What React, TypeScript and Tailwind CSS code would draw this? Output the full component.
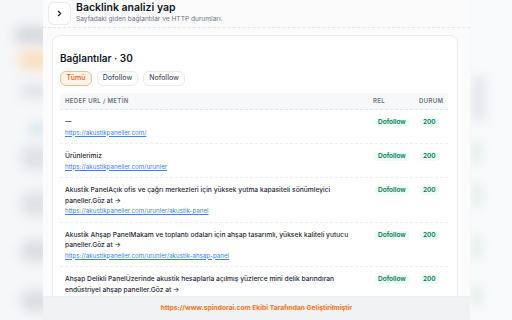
import { ChevronRight } from "lucide-react";

type Row = { title: string[]; url: string };

const rows: Row[] = [
  { title: ["—"], url: "https://akustikpaneller.com/" },
  { title: ["Ürünlerimiz"], url: "https://akustikpaneller.com/urunler" },
  {
    title: [
      "Akustik PanelAçık ofis ve çağrı merkezleri için yüksek yutma kapasiteli sönümleyici",
      "paneller.Göz at →",
    ],
    url: "https://akustikpaneller.com/urunler/akustik-panel",
  },
  {
    title: [
      "Akustik Ahşap PanelMakam ve toplantı odaları için ahşap tasarımlı, yüksek kaliteli yutucu",
      "paneller.Göz at →",
    ],
    url: "https://akustikpaneller.com/urunler/akustik-ahsap-panel",
  },
  {
    title: [
      "Ahşap Delikli PanelÜzerinde akustik hesaplarla açılmış yüzlerce mini delik barındıran",
      "endüstriyel ahşap paneller.Göz at →",
    ],
    url: "https://akustikpaneller.com/urunler/ahsap-delikli-panel",
  },
];

function SideBlur({ side }: { side: "left" | "right" }) {
  if (side === "left") {
    return (
      <div className="relative w-[43px] shrink-0 overflow-hidden bg-[#f6f7f9]">
        <div className="absolute left-[14px] top-[26px] h-[18px] w-[40px] rounded-full bg-[#d6d8dd] blur-[6px]" />
        <div className="absolute left-[18px] top-[50px] h-[20px] w-[34px] rounded-full bg-[#fadfc2] blur-[6px]" />
        <div className="absolute left-[20px] top-[84px] h-[14px] w-[30px] rounded-full bg-[#e0e2e6] blur-[6px]" />
        <div className="absolute left-[28px] top-[122px] h-[14px] w-[20px] rounded-full bg-[#dde9f1] blur-[5px]" />
        <div className="absolute left-[20px] top-[146px] h-[24px] w-[34px] rounded-full bg-[#dfe1e5] blur-[6px]" />
        <div className="absolute left-[20px] top-[192px] h-[24px] w-[34px] rounded-full bg-[#dfe1e5] blur-[6px]" />
        <div className="absolute left-[20px] top-[240px] h-[22px] w-[34px] rounded-full bg-[#dcdee2] blur-[6px]" />
        <div className="absolute left-[20px] top-[290px] h-[22px] w-[34px] rounded-full bg-[#dcdee2] blur-[6px]" />
      </div>
    );
  }
  return (
    <div className="relative w-[42px] shrink-0 overflow-hidden bg-[#f8f9fa]">
      <div className="absolute left-[2px] top-[76px] h-[46px] w-[14px] rounded-full bg-[#e6e8ec] blur-[5px]" />
      <div className="absolute left-[2px] top-[142px] h-[22px] w-[10px] rounded-full bg-[#e4efe9] blur-[4px]" />
      <div className="absolute left-[2px] top-[184px] h-[22px] w-[10px] rounded-full bg-[#e4efe9] blur-[4px]" />
      <div className="absolute left-[2px] top-[236px] h-[22px] w-[10px] rounded-full bg-[#e4efe9] blur-[4px]" />
      <div className="absolute left-[2px] top-[286px] h-[20px] w-[10px] rounded-full bg-[#e4efe9] blur-[4px]" />
    </div>
  );
}

export default function App() {
  return (
    <div className="flex h-[320px] w-[512px] overflow-hidden bg-[#f6f7f9] font-['Inter',sans-serif] text-[#1f2937]">
      <SideBlur side="left" />

      <div className="flex w-[427px] shrink-0 flex-col bg-[#fbfbfc]">
        <div className="flex h-[28px] shrink-0 items-start gap-[5px] border-b border-dashed border-[#e5e7eb] pl-[5px]">
          <button
            type="button"
            className="mt-[2px] flex h-[23px] w-[23px] items-center justify-center rounded-md border border-[#e8eaed] bg-white text-[#111827]"
          >
            <ChevronRight className="h-[9px] w-[9px]" strokeWidth={3} />
          </button>
          <div className="pt-[1px]">
            <h1 className="text-[10.5px] font-semibold leading-[13px] text-[#111827]">
              Backlink analizi yap
            </h1>
            <p className="text-[6.6px] leading-[10px] text-[#6b7280]">
              Sayfadaki giden bağlantılar ve HTTP durumları.
            </p>
          </div>
        </div>

        <div className="flex-1 overflow-hidden pl-[9px] pr-[12px] pt-[7px]">
          <div className="rounded-lg border border-[#eaecef] bg-white pb-4 pl-[7px] pr-[7px] pt-[15px]">
            <h2 className="text-[10px] font-semibold leading-[14px] text-[#111827]">
              Bağlantılar · 30
            </h2>
            <div className="mt-[6px] flex gap-[5px]">
              <button
                type="button"
                className="h-[15px] w-[32px] rounded-md border border-[#f5b98a] bg-[#fff4ea] text-[7px] font-medium text-[#ea580c]"
              >
                Tümü
              </button>
              <button
                type="button"
                className="h-[15px] w-[41px] rounded-md border border-[#e8eaed] bg-white text-[7px] font-medium text-[#4b5563]"
              >
                Dofollow
              </button>
              <button
                type="button"
                className="h-[15px] w-[42px] rounded-md border border-[#e8eaed] bg-white text-[7px] font-medium text-[#4b5563]"
              >
                Nofollow
              </button>
            </div>

            <div className="mt-[7px] mr-[2px]">
              <div className="grid h-[17px] grid-cols-[1fr_46px_30px] items-center border-b border-dashed border-[#e5e7eb] bg-[#f7f8f9] text-[6px] font-semibold uppercase leading-none tracking-[0.06em] text-[#6b7280]">
                <div className="pl-[5px]">Hedef URL / Metİn</div>
                <div className="pl-[1px]">Rel</div>
                <div className="pl-[1px]">Durum</div>
              </div>

              {rows.map((r, i) => (
                <div
                  key={i}
                  className="grid grid-cols-[1fr_46px_30px] items-start border-b border-dashed border-[#eceef1] pb-[5px] pt-[7px]"
                >
                  <div className="pl-[5px] pr-[12px]">
                    <div className="text-[6.7px] font-medium leading-[10.5px] text-[#1f2937]">
                      {r.title.map((t, j) => (
                        <div key={j}>{t}</div>
                      ))}
                    </div>
                    <a
                      href="#"
                      className="block text-[6.2px] leading-[10.5px] text-[#3b82f6] underline"
                    >
                      {r.url}
                    </a>
                  </div>
                  <div className="flex pl-[3px] pt-[1px]">
                    <span className="rounded-[3px] bg-[#ecfdf5] px-[3px] text-[6.5px] font-semibold leading-[9px] text-[#047857]">
                      Dofollow
                    </span>
                  </div>
                  <div className="flex pl-[2px] pt-[1px]">
                    <span className="rounded-[3px] bg-[#ecfdf5] px-[3px] text-[6.5px] font-semibold leading-[9px] text-[#047857]">
                      200
                    </span>
                  </div>
                </div>
              ))}
            </div>
          </div>
        </div>

        <div className="flex h-[24px] shrink-0 items-center justify-center border-t border-[#eceef1] bg-[#f1f2f4]">
          <span className="text-[6.7px] font-bold text-[#f97316]">
            https://www.spindorai.com Ekibi Tarafından Geliştirilmiştir
          </span>
        </div>
      </div>

      <SideBlur side="right" />
    </div>
  );
}
